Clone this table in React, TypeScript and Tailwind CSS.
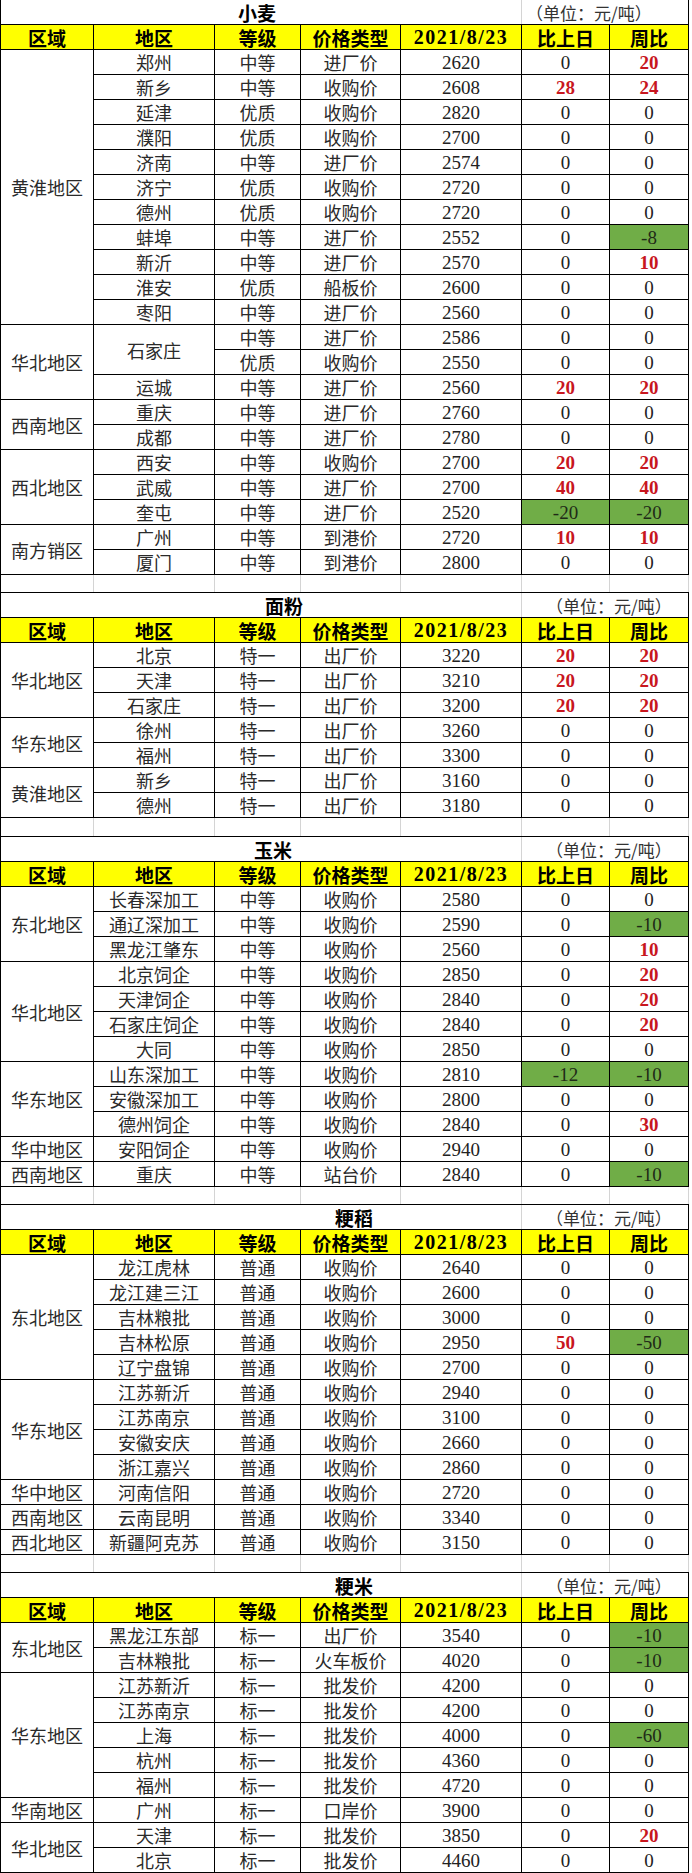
import React from 'react';

type Row = [string, string, number, number, number];
type City = { name: string; rows: Row[] };
type Group = { region: string; cities: City[] };
type Section = {
  title: string;
  titlePad: string;
  unitPad: string;
  spacer: string;
  groups: Group[];
};

const c = (name: string, grade: string, type: string, price: number, d1: number, d2: number): City => ({
  name,
  rows: [[grade, type, price, d1, d2]],
});

const sections: Section[] = [
  {
    title: '小麦',
    titlePad: 'pl-[237px]',
    unitPad: 'pl-[4px]',
    spacer: 'h-[18px]',
    groups: [
      {
        region: '黄淮地区',
        cities: [
          c('郑州', '中等', '进厂价', 2620, 0, 20),
          c('新乡', '中等', '收购价', 2608, 28, 24),
          c('延津', '优质', '收购价', 2820, 0, 0),
          c('濮阳', '优质', '收购价', 2700, 0, 0),
          c('济南', '中等', '进厂价', 2574, 0, 0),
          c('济宁', '优质', '收购价', 2720, 0, 0),
          c('德州', '优质', '收购价', 2720, 0, 0),
          c('蚌埠', '中等', '进厂价', 2552, 0, -8),
          c('新沂', '中等', '进厂价', 2570, 0, 10),
          c('淮安', '优质', '船板价', 2600, 0, 0),
          c('枣阳', '中等', '进厂价', 2560, 0, 0),
        ],
      },
      {
        region: '华北地区',
        cities: [
          {
            name: '石家庄',
            rows: [
              ['中等', '进厂价', 2586, 0, 0],
              ['优质', '收购价', 2550, 0, 0],
            ],
          },
          c('运城', '中等', '进厂价', 2560, 20, 20),
        ],
      },
      {
        region: '西南地区',
        cities: [c('重庆', '中等', '进厂价', 2760, 0, 0), c('成都', '中等', '进厂价', 2780, 0, 0)],
      },
      {
        region: '西北地区',
        cities: [
          c('西安', '中等', '收购价', 2700, 20, 20),
          c('武威', '中等', '进厂价', 2700, 40, 40),
          c('奎屯', '中等', '进厂价', 2520, -20, -20),
        ],
      },
      {
        region: '南方销区',
        cities: [c('广州', '中等', '到港价', 2720, 10, 10), c('厦门', '中等', '到港价', 2800, 0, 0)],
      },
    ],
  },
  {
    title: '面粉',
    titlePad: 'pl-[264px]',
    unitPad: 'pl-[24px]',
    spacer: 'h-[19px]',
    groups: [
      {
        region: '华北地区',
        cities: [
          c('北京', '特一', '出厂价', 3220, 20, 20),
          c('天津', '特一', '出厂价', 3210, 20, 20),
          c('石家庄', '特一', '出厂价', 3200, 20, 20),
        ],
      },
      {
        region: '华东地区',
        cities: [c('徐州', '特一', '出厂价', 3260, 0, 0), c('福州', '特一', '出厂价', 3300, 0, 0)],
      },
      {
        region: '黄淮地区',
        cities: [c('新乡', '特一', '出厂价', 3160, 0, 0), c('德州', '特一', '出厂价', 3180, 0, 0)],
      },
    ],
  },
  {
    title: '玉米',
    titlePad: 'pl-[253px]',
    unitPad: 'pl-[24px]',
    spacer: 'h-[18px]',
    groups: [
      {
        region: '东北地区',
        cities: [
          c('长春深加工', '中等', '收购价', 2580, 0, 0),
          c('通辽深加工', '中等', '收购价', 2590, 0, -10),
          c('黑龙江肇东', '中等', '收购价', 2560, 0, 10),
        ],
      },
      {
        region: '华北地区',
        cities: [
          c('北京饲企', '中等', '收购价', 2850, 0, 20),
          c('天津饲企', '中等', '收购价', 2840, 0, 20),
          c('石家庄饲企', '中等', '收购价', 2840, 0, 20),
          c('大同', '中等', '收购价', 2850, 0, 0),
        ],
      },
      {
        region: '华东地区',
        cities: [
          c('山东深加工', '中等', '收购价', 2810, -12, -10),
          c('安徽深加工', '中等', '收购价', 2800, 0, 0),
          c('德州饲企', '中等', '收购价', 2840, 0, 30),
        ],
      },
      { region: '华中地区', cities: [c('安阳饲企', '中等', '收购价', 2940, 0, 0)] },
      { region: '西南地区', cities: [c('重庆', '中等', '站台价', 2840, 0, -10)] },
    ],
  },
  {
    title: '粳稻',
    titlePad: 'pl-[334px]',
    unitPad: 'pl-[24px]',
    spacer: 'h-[18px]',
    groups: [
      {
        region: '东北地区',
        cities: [
          c('龙江虎林', '普通', '收购价', 2640, 0, 0),
          c('龙江建三江', '普通', '收购价', 2600, 0, 0),
          c('吉林粮批', '普通', '收购价', 3000, 0, 0),
          c('吉林松原', '普通', '收购价', 2950, 50, -50),
          c('辽宁盘锦', '普通', '收购价', 2700, 0, 0),
        ],
      },
      {
        region: '华东地区',
        cities: [
          c('江苏新沂', '普通', '收购价', 2940, 0, 0),
          c('江苏南京', '普通', '收购价', 3100, 0, 0),
          c('安徽安庆', '普通', '收购价', 2660, 0, 0),
          c('浙江嘉兴', '普通', '收购价', 2860, 0, 0),
        ],
      },
      { region: '华中地区', cities: [c('河南信阳', '普通', '收购价', 2720, 0, 0)] },
      { region: '西南地区', cities: [c('云南昆明', '普通', '收购价', 3340, 0, 0)] },
      { region: '西北地区', cities: [c('新疆阿克苏', '普通', '收购价', 3150, 0, 0)] },
    ],
  },
  {
    title: '粳米',
    titlePad: 'pl-[334px]',
    unitPad: 'pl-[24px]',
    spacer: '',
    groups: [
      {
        region: '东北地区',
        cities: [
          c('黑龙江东部', '标一', '出厂价', 3540, 0, -10),
          c('吉林粮批', '标一', '火车板价', 4020, 0, -10),
        ],
      },
      {
        region: '华东地区',
        cities: [
          c('江苏新沂', '标一', '批发价', 4200, 0, 0),
          c('江苏南京', '标一', '批发价', 4200, 0, 0),
          c('上海', '标一', '批发价', 4000, 0, -60),
          c('杭州', '标一', '批发价', 4360, 0, 0),
          c('福州', '标一', '批发价', 4720, 0, 0),
        ],
      },
      { region: '华南地区', cities: [c('广州', '标一', '口岸价', 3900, 0, 0)] },
      {
        region: '华北地区',
        cities: [c('天津', '标一', '批发价', 3850, 0, 20), c('北京', '标一', '批发价', 4460, 0, 0)],
      },
    ],
  },
];

const cjk = "font-['Noto_Sans_CJK_SC',sans-serif]";
const num = "font-['Liberation_Serif','Noto_Sans_CJK_SC',serif]";

function Change({ v, w }: { v: number; w: string }) {
  if (v < 0) {
    return (
      <div className={`${w} h-full border-r border-black bg-[#70ad47] flex items-center justify-center ${num} text-[19px] text-[#1f2a17]`}>
        {v}
      </div>
    );
  }
  if (v > 0) {
    return (
      <div className={`${w} h-full border-r border-black flex items-center justify-center ${num} text-[19px] font-bold text-[#c8161e]`}>
        {v}
      </div>
    );
  }
  return (
    <div className={`${w} h-full border-r border-black flex items-center justify-center ${num} text-[19px] text-[#222]`}>
      {v}
    </div>
  );
}

function DataRow({ row }: { row: Row }) {
  const [grade, type, price, d1, d2] = row;
  return (
    <div className="flex h-[25px] border-b border-black">
      <div className={`w-[86px] h-full border-r border-black flex items-center justify-center ${cjk} text-[18px] text-[#2a2a2a]`}>
        {grade}
      </div>
      <div className={`w-[100px] h-full border-r border-black flex items-center justify-center ${cjk} text-[18px] text-[#2a2a2a]`}>
        {type}
      </div>
      <div className={`w-[121px] h-full border-r border-black flex items-center justify-center ${num} text-[19px] text-[#222]`}>
        {price}
      </div>
      <Change v={d1} w="w-[88px]" />
      <Change v={d2} w="w-[79px]" />
    </div>
  );
}

function HeaderRow() {
  const head = `h-full border-r border-black flex items-center justify-center ${cjk} text-[19px] font-bold text-black`;
  return (
    <div className="flex h-[25px] border-b border-black bg-[#ffff00]">
      <div className={`w-[93px] ${head}`}>区域</div>
      <div className={`w-[121px] ${head}`}>地区</div>
      <div className={`w-[86px] ${head}`}>等级</div>
      <div className={`w-[100px] ${head}`}>价格类型</div>
      <div className={`w-[121px] h-full border-r border-black flex items-center justify-center ${num} text-[20px] font-bold tracking-[1.5px] text-black`}>
        2021/8/23
      </div>
      <div className={`w-[88px] ${head}`}>比上日</div>
      <div className={`w-[79px] ${head}`}>周比</div>
    </div>
  );
}

function Spacer({ h }: { h: string }) {
  const cell = 'h-full border-r border-[#d4d4d4]';
  return (
    <div className={`flex ${h} border-b border-black`}>
      <div className={`w-[93px] ${cell}`} />
      <div className={`w-[121px] ${cell}`} />
      <div className={`w-[86px] ${cell}`} />
      <div className={`w-[100px] ${cell}`} />
      <div className={`w-[121px] ${cell}`} />
      <div className={`w-[88px] ${cell}`} />
      <div className={`w-[79px] ${cell}`} />
    </div>
  );
}

function SectionBlock({ s }: { s: Section }) {
  return (
    <div>
      <div className="flex h-[25px] border-b border-black">
        <div className={`w-[521px] h-full border-r border-[#d4d4d4] flex items-center ${s.titlePad} ${cjk} text-[19px] font-bold text-black`}>
          {s.title}
        </div>
        <div className={`w-[167px] h-full border-r border-black flex items-center ${s.unitPad} ${cjk} text-[17px] text-[#333]`}>
          （单位：元/吨）
        </div>
      </div>
      <HeaderRow />
      {s.groups.map((g, gi) => (
        <div key={gi} className="flex">
          <div className={`w-[93px] border-r border-b border-black flex items-center justify-center ${cjk} text-[18px] text-[#2a2a2a]`}>
            {g.region}
          </div>
          <div className="flex flex-col">
            {g.cities.map((city, ci) => (
              <div key={ci} className="flex">
                <div className={`w-[121px] border-r border-b border-black flex items-center justify-center ${cjk} text-[18px] text-[#2a2a2a]`}>
                  {city.name}
                </div>
                <div className="flex flex-col">
                  {city.rows.map((r, ri) => (
                    <DataRow key={ri} row={r} />
                  ))}
                </div>
              </div>
            ))}
          </div>
        </div>
      ))}
      {s.spacer && <Spacer h={s.spacer} />}
    </div>
  );
}

export default function App() {
  return (
    <div className="min-h-screen w-[692px] bg-white">
      <div className="w-[689px] border-l border-black leading-none">
        {sections.map((s, i) => (
          <SectionBlock key={i} s={s} />
        ))}
      </div>
    </div>
  );
}
